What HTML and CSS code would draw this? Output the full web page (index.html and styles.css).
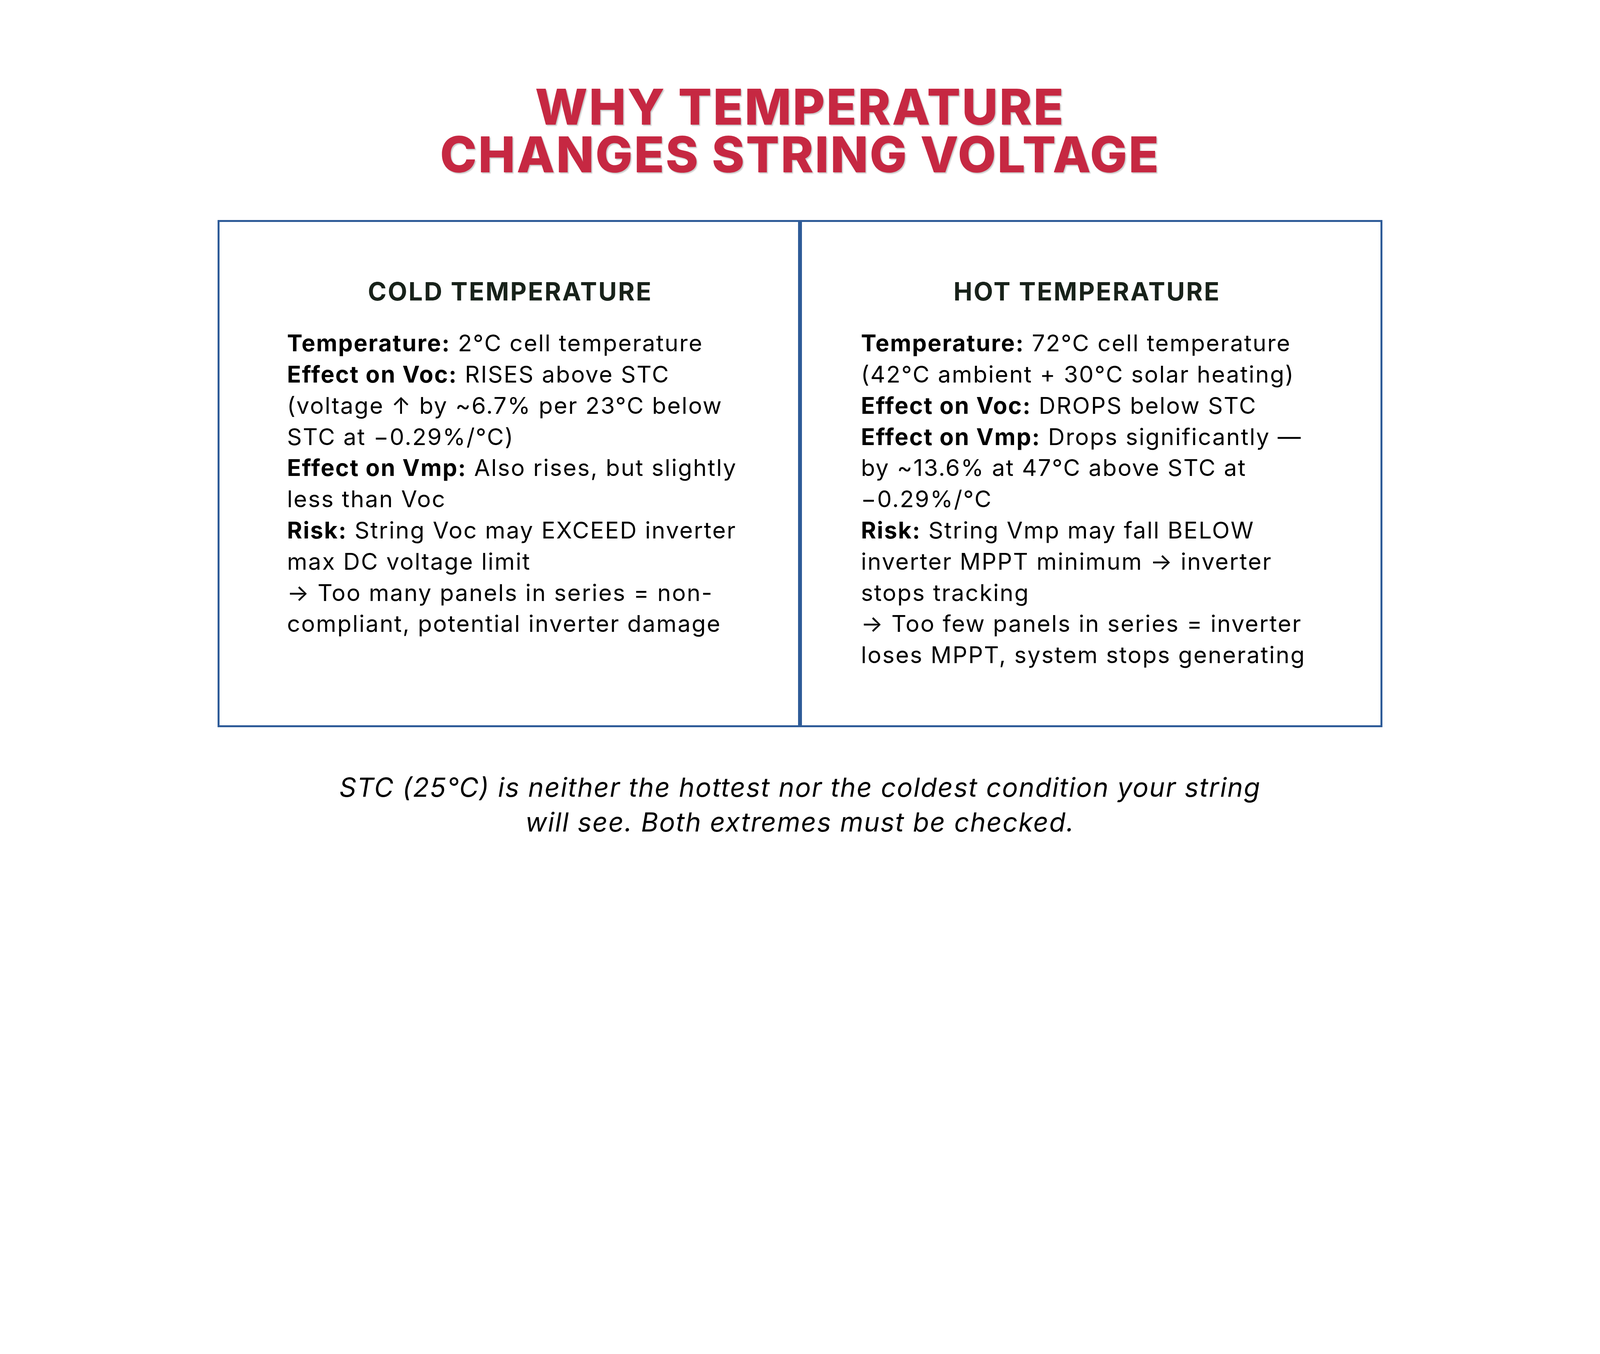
FILE: index.html
```html
<!DOCTYPE html>
<html lang="en">
<head>
<meta charset="utf-8">
<title>Why Temperature Changes String Voltage</title>
<link rel="stylesheet" href="styles.css">
</head>
<body>
<main class="slide">
  <h1 class="title">WHY TEMPERATURE<br>CHANGES STRING VOLTAGE</h1>

  <section class="compare">
    <div class="col col-cold">
      <h2 class="col-head">COLD TEMPERATURE</h2>
      <div class="col-body">
        <p><b>Temperature:</b> 2°C cell temperature</p>
        <p><b>Effect on Voc:</b> RISES above STC<br>(voltage ↑ by ~6.7% per 23°C below<br>STC at −0.29%/°C)</p>
        <p><b>Effect on Vmp:</b> Also rises, but slightly<br>less than Voc</p>
        <p><b>Risk:</b> String Voc may EXCEED inverter<br>max DC voltage limit</p>
        <p>→ Too many panels in series = non-<br>compliant, potential inverter damage</p>
      </div>
    </div>
    <div class="col col-hot">
      <h2 class="col-head">HOT TEMPERATURE</h2>
      <div class="col-body">
        <p><b>Temperature:</b> 72°C cell temperature<br>(42°C ambient + 30°C solar heating)</p>
        <p><b>Effect on Voc:</b> DROPS below STC</p>
        <p><b>Effect on Vmp:</b> Drops significantly —<br>by ~13.6% at 47°C above STC at<br>−0.29%/°C</p>
        <p><b>Risk:</b> String Vmp may fall BELOW<br>inverter MPPT minimum → inverter<br>stops tracking</p>
        <p>→ Too few panels in series = inverter<br>loses MPPT, system stops generating</p>
      </div>
    </div>
  </section>

  <p class="note">STC (25°C) is neither the hottest nor the coldest condition your string<br>will see. Both extremes must be checked.</p>
</main>
</body>
</html>
```

FILE: styles.css
```css
:root {
  --u: calc(100vw / 6160);
}

html, body {
  margin: 0;
  padding: 0;
  background: #ffffff;
}

body {
  width: 100vw;
  height: calc(3465 * var(--u));
  overflow: hidden;
  font-family: "Inter", "Liberation Sans", sans-serif;
  color: #000000;
}

.slide {
  display: flex;
  flex-direction: column;
  align-items: center;
  padding-top: calc(321 * var(--u));
}

.title {
  margin: 0;
  font-size: calc(191 * var(--u));
  line-height: calc(183 * var(--u));
  font-weight: 800;
  letter-spacing: calc(5 * var(--u));
  text-align: center;
  color: #c62842;
  text-shadow: calc(4 * var(--u)) calc(4 * var(--u)) calc(4 * var(--u)) rgba(0, 0, 0, 0.22);
}

.compare {
  margin-top: calc(159 * var(--u));
  width: calc(4485 * var(--u));
  height: calc(1953 * var(--u));
  display: grid;
  grid-template-columns: minmax(0, 1fr) minmax(0, 1fr);
}

.col {
  border: calc(8 * var(--u)) solid #2e5b98;
  padding-top: calc(211 * var(--u));
  box-sizing: border-box;
  min-width: 0;
}

.col-cold {
  padding-left: calc(260 * var(--u));
  padding-right: calc(249 * var(--u));
}

.col-hot {
  padding-left: calc(227 * var(--u));
  padding-right: calc(259 * var(--u));
}

.col-head {
  margin: 0;
  font-size: calc(97 * var(--u));
  line-height: calc(116 * var(--u));
  font-weight: 700;
  letter-spacing: calc(5 * var(--u));
  text-align: center;
  color: #18221a;
  white-space: nowrap;
}

.col-body {
  margin-top: calc(80 * var(--u));
  font-size: calc(89 * var(--u));
  line-height: calc(120 * var(--u));
  font-weight: 400;
  letter-spacing: calc(3.8 * var(--u));
  white-space: nowrap;
}

.col-body p {
  margin: 0;
}

.col-body b {
  font-weight: 700;
  letter-spacing: calc(3.5 * var(--u));
}

.note {
  margin: calc(164 * var(--u)) 0 0;
  font-size: calc(102 * var(--u));
  line-height: calc(134 * var(--u));
  font-style: italic;
  font-weight: 400;
  letter-spacing: calc(3 * var(--u));
  text-align: center;
  white-space: nowrap;
}
```
